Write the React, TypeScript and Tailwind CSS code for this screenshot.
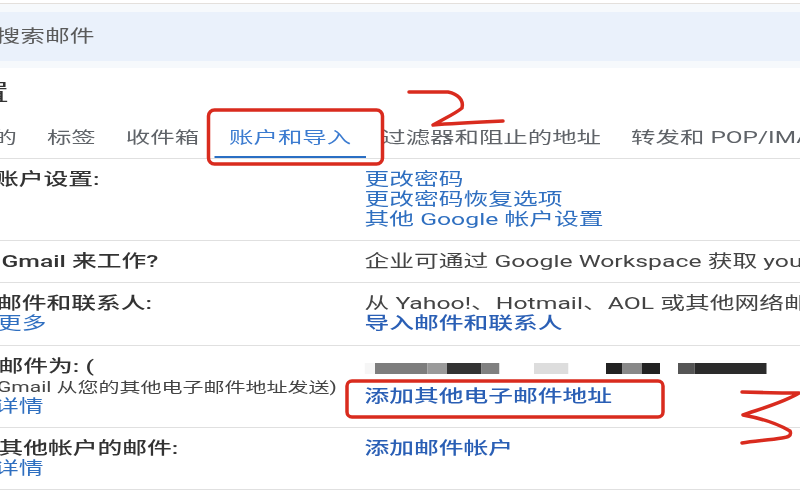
const linkClass = "text-[#2f6fc0]";
const strongLinkClass = "font-medium text-[#2a5fb5]";

/** One settings row: label column on the left, values on the right */
function Row({ left, right, className = "" }: { left: React.ReactNode; right: React.ReactNode; className?: string }) {
  return (
    <div className={`grid grid-cols-[243px_1fr] border-b border-[#e0e0e0] ${className}`}>
      <div className="whitespace-nowrap">{left}</div>
      <div className="overflow-hidden whitespace-nowrap text-[#444]">{right}</div>
    </div>
  );
}

function Label({ children, className = "" }: { children: React.ReactNode; className?: string }) {
  return <div className={`font-medium text-[#333] ${className}`}>{children}</div>;
}

const tabs = [
  { label: "的", className: "-ml-[15px]" },
  { label: "标签" },
  { label: "收件箱" },
  { label: "账户和导入", active: true },
  { label: "过滤器和阻止的地址" },
  { label: "转发和 POP/IMAP" },
];

// blurred-out address, widths are in unstretched px
const redacted = [
  ["w-[7px]", "bg-[#f6f6f6]"],
  ["w-[35px]", "bg-[#7d7d7d]"],
  ["w-[13px]", "bg-[#9a9a9a]"],
  ["w-[23px]", "bg-[#333333]"],
  ["w-[12px]", "bg-[#808080]"],
  ["w-[23px]", "bg-white"],
  ["w-[23px]", "bg-[#dddddd]"],
  ["w-[25px]", "bg-white"],
  ["w-[11px]", "bg-[#222222]"],
  ["w-[13px]", "bg-[#888888]"],
  ["w-[12px]", "bg-[#222222]"],
  ["w-[12px]", "bg-white"],
  ["w-[11px]", "bg-[#555555]"],
  ["w-[48px]", "bg-[#2b2b2b]"],
];

export default function App() {
  return (
    <div className="relative h-[500px] w-[800px] overflow-hidden bg-white blur-[0.7px] [font-family:Roboto,'Noto_Sans_CJK_SC',sans-serif]">
      {/* the screenshot is stretched sideways, so the whole page is too */}
      <div className="w-[534px] origin-top-left scale-x-150 text-[16.5px] leading-[20px]">
        <div className="h-[3px]" />
        <div className="h-[1px] bg-[#e4e0dc]" />
        <div className="bg-[#f6f9fc] pt-[8px] pb-[7px]">
          <div className="flex h-[49px] items-center whitespace-nowrap bg-[#eaf1fb] text-[#5a5a5a]">
            <span className="-ml-[3px]">搜索邮件</span>
          </div>
        </div>
        <div className="flex h-[43px] items-center overflow-hidden pt-[7px]">
          <span className="-ml-[38px] text-[22px] leading-[30px] text-[#333]">设置</span>
        </div>
        <div className="flex h-[48px] items-end border-b border-[#e0e0e0] whitespace-nowrap text-[16.3px]">
          {tabs.map((tab) => (
            <div
              key={tab.label}
              className={`px-[10px] pb-[8px] ${tab.className ?? ""} ${
                tab.active ? "border-b-2 border-[#2a6fc4] text-[#3b7bd0]" : "mb-[2px] text-[#5f6368]"
              }`}
            >
              {tab.label}
            </div>
          ))}
        </div>

        <Row
          className="h-[82px] pt-[11px]"
          left={<Label className="-ml-[4px]">账户设置:</Label>}
          right={
            <div className={linkClass}>
              <div>更改密码</div>
              <div>更改密码恢复选项</div>
              <div>其他 Google 帐户设置</div>
            </div>
          }
        />
        <Row
          className="h-[42px] pt-[11px]"
          left={<Label className="ml-[1px]">Gmail 来工作?</Label>}
          right="企业可通过 Google Workspace 获取 your"
        />
        <Row
          className="h-[63px] pt-[11px]"
          left={
            <>
              <Label className="-ml-[2px]">邮件和联系人:</Label>
              <div className={`-ml-[2px] ${linkClass}`}>更多</div>
            </>
          }
          right={
            <>
              <div>从 Yahoo!、Hotmail、AOL 或其他网络邮箱</div>
              <div className={strongLinkClass}>导入邮件和联系人</div>
            </>
          }
        />
        <Row
          className="h-[82px] pt-[11px]"
          left={
            <>
              <Label className="-ml-[1px]">邮件为: (</Label>
              <div className="-ml-[2px] text-[14px] text-[#444]">Gmail 从您的其他电子邮件地址发送)</div>
              <div className={`-ml-[4px] ${linkClass}`}>详情</div>
            </>
          }
          right={
            <>
              <div className="flex h-[20px] items-center pt-[3px]">
                {redacted.map(([width, color], i) => (
                  <div key={i} className={`h-[11px] shrink-0 ${width} ${color}`} />
                ))}
              </div>
              <div className={`mt-[10px] ${strongLinkClass}`}>添加其他电子邮件地址</div>
            </>
          }
        />
        <Row
          className="h-[62px] pt-[11px]"
          left={
            <>
              <Label className="-ml-[1px]">其他帐户的邮件:</Label>
              <div className={`-ml-[4px] ${linkClass}`}>详情</div>
            </>
          }
          right={<div className={strongLinkClass}>添加邮件帐户</div>}
        />
      </div>

      {/* hand-drawn red annotations on top of the page */}
      <svg className="absolute inset-0" width="800" height="500" viewBox="0 0 800 500" fill="none">
        <g stroke="#d92b1e" strokeLinecap="round" strokeLinejoin="round">
          <rect x="208.5" y="110" width="174" height="54" rx="6" strokeWidth="3.5" />
          <rect x="347" y="381" width="316" height="36" rx="5" strokeWidth="3.5" />
          <path d="M409 92 L448 92 C458 94 464 100 462 108 C455 114 445 118 433 125 C455 123 480 122 503 121" strokeWidth="3.5" />
          <path d="M742 392 L782 393 L799 393 C785 402 760 409 743 415 C760 418 778 424 790 431 C792 436 788 437 782 438 C770 440 755 441 742 443" strokeWidth="3.5" />
        </g>
      </svg>
    </div>
  );
}
